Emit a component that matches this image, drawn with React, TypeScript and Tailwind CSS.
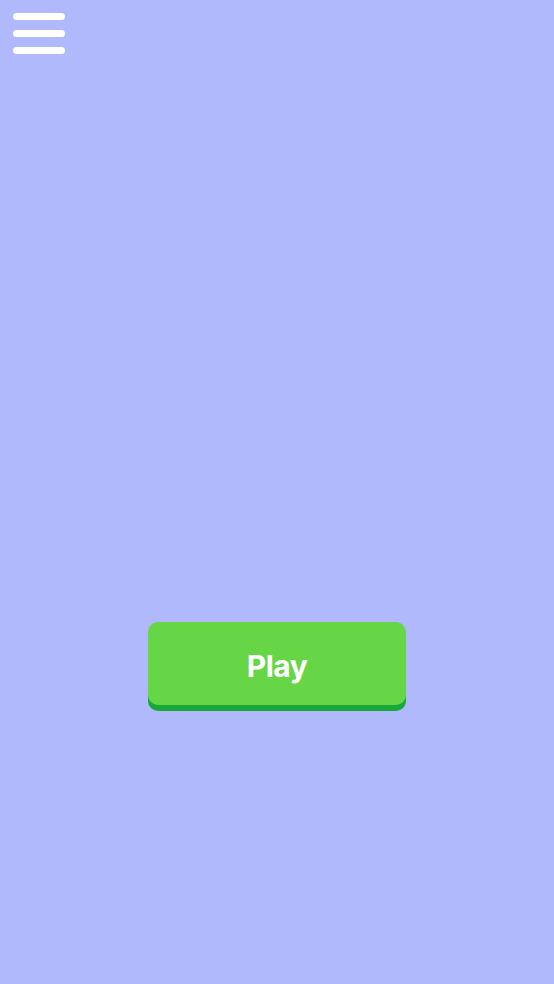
export default function App() {
  return (
    <div className="flex h-[984px] w-full flex-col bg-[#b0b9fb] font-['Inter','Noto_Sans',sans-serif]">
      <div className="flex p-[13px]">
        <button className="flex w-[52px] flex-col gap-[10px]" aria-label="Menu">
          <span className="h-[7px] w-full rounded-full bg-white" />
          <span className="h-[7px] w-full rounded-full bg-white" />
          <span className="h-[7px] w-full rounded-full bg-white" />
        </button>
      </div>
      <div className="flex flex-1 flex-col items-center pt-[555px]">
        <button className="flex h-[83px] w-[258px] items-center justify-center rounded-[10px] bg-[#66d646] pt-[5px] text-[30px] font-bold tracking-[-0.5px] text-white shadow-[0_6px_0_#17a83a]">
          Play
        </button>
      </div>
    </div>
  )
}
